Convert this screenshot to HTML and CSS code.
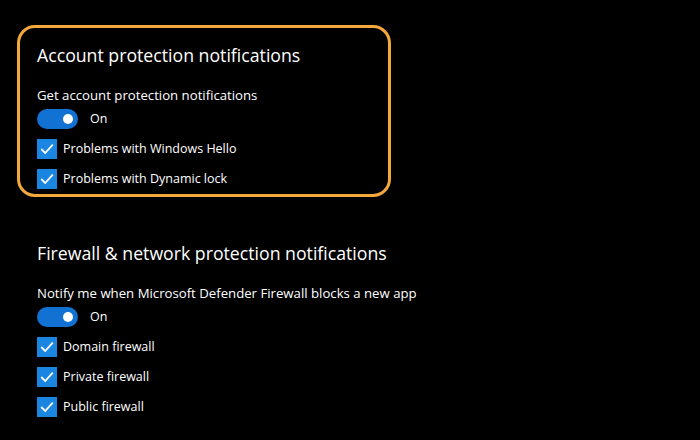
FILE: index.html
```html
<!DOCTYPE html>
<html lang="en">
<head>
    <meta charset="UTF-8">
    <meta name="viewport" content="width=device-width, initial-scale=1.0">
    <title>Notifications</title>
    <link rel="stylesheet" href="styles.css">
</head>
<body>
    <div class="page">
        <section class="group highlighted">
            <h2>Account protection notifications</h2>
            <p class="label">Get account protection notifications</p>
            <div class="toggle-row">
                <span class="toggle"><span class="knob"></span></span>
                <span>On</span>
            </div>
            <label class="check">
                <span class="box"><svg viewBox="0 0 20 20"><path d="M4.2 10 L8.2 14 L15.8 5.6"/></svg></span>
                Problems with Windows Hello
            </label>
            <label class="check">
                <span class="box"><svg viewBox="0 0 20 20"><path d="M4.2 10 L8.2 14 L15.8 5.6"/></svg></span>
                Problems with Dynamic lock
            </label>
        </section>

        <section class="group">
            <h2>Firewall &amp; network protection notifications</h2>
            <p class="label">Notify me when Microsoft Defender Firewall blocks a new app</p>
            <div class="toggle-row">
                <span class="toggle"><span class="knob"></span></span>
                <span>On</span>
            </div>
            <label class="check">
                <span class="box"><svg viewBox="0 0 20 20"><path d="M4.2 10 L8.2 14 L15.8 5.6"/></svg></span>
                Domain firewall
            </label>
            <label class="check">
                <span class="box"><svg viewBox="0 0 20 20"><path d="M4.2 10 L8.2 14 L15.8 5.6"/></svg></span>
                Private firewall
            </label>
            <label class="check">
                <span class="box"><svg viewBox="0 0 20 20"><path d="M4.2 10 L8.2 14 L15.8 5.6"/></svg></span>
                Public firewall
            </label>
        </section>
    </div>
</body>
</html>
```

FILE: styles.css
```css
html, body {
    margin: 0;
    background: #000;
}
body {
    font-family: "Open Sans", "Noto Sans", sans-serif;
    color: #fff;
    font-size: 12.5px;
    line-height: 20px;
}
.page {
    padding: 25px 0 0 17px;
    display: flex;
    flex-direction: column;
    gap: 26px;
}
.group {
    width: 334px;
    padding: 15px 17px 5px 17px;
    border: 3px solid transparent;
    border-radius: 18px;
    display: flex;
    flex-direction: column;
}
.highlighted {
    border-color: #f2a93a;
}
h2 {
    margin: 0;
    font-size: 17.7px;
    font-weight: 400;
    line-height: 24px;
    white-space: nowrap;
}
.label {
    margin: 18px 0 4px;
    font-size: 13.2px;
    white-space: nowrap;
}
.toggle-row {
    display: flex;
    align-items: center;
    gap: 12px;
    height: 20px;
}
.toggle {
    position: relative;
    width: 41px;
    height: 20px;
    border-radius: 10px;
    background: #1172d4;
}
.knob {
    position: absolute;
    top: 5px;
    right: 5px;
    width: 10px;
    height: 10px;
    border-radius: 50%;
    background: #fff;
}
.check {
    display: flex;
    align-items: center;
    gap: 6px;
    height: 20px;
    margin-top: 10px;
    white-space: nowrap;
}
.box {
    width: 20px;
    height: 20px;
    background: #1a86e2;
    display: flex;
}
.box svg {
    width: 20px;
    height: 20px;
    fill: none;
    stroke: #fff;
    stroke-width: 1.8;
}
```
